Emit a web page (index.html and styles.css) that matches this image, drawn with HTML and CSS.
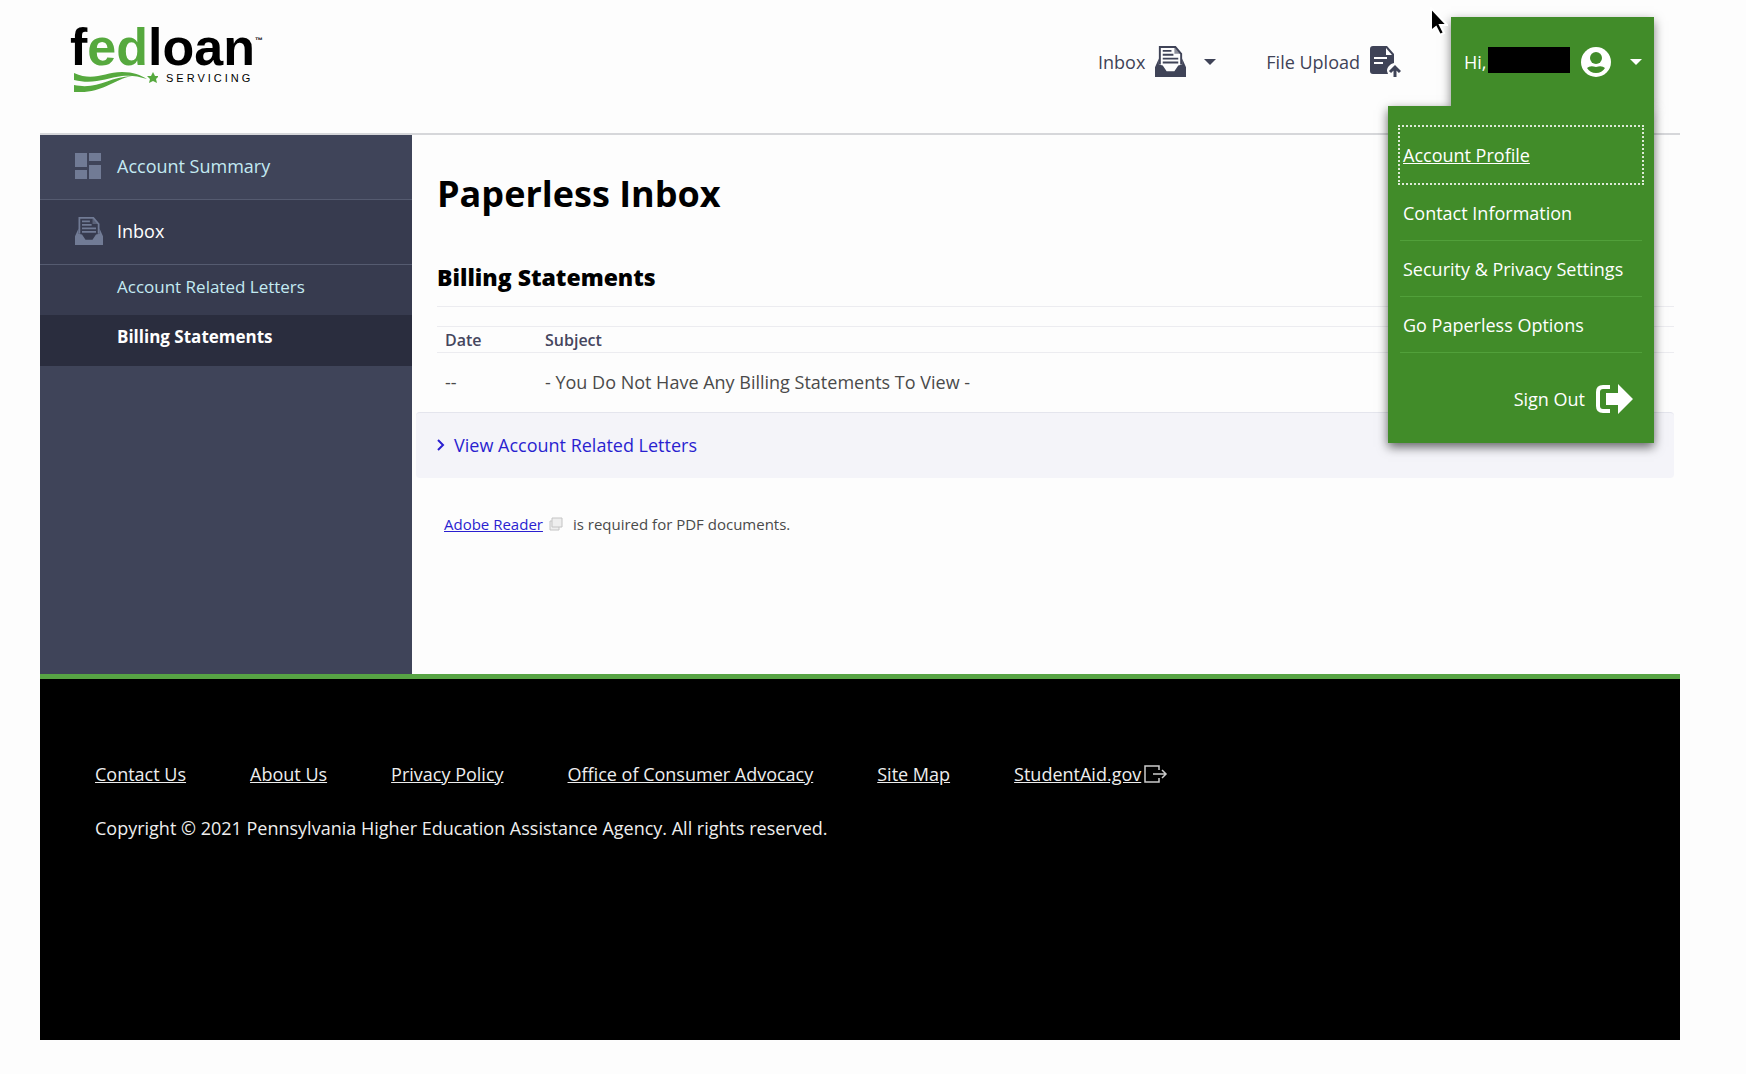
FILE: index.html
```html
<!DOCTYPE html>
<html lang="en">
<head>
<meta charset="utf-8">
<meta name="viewport" content="width=device-width, initial-scale=1">
<title>Paperless Inbox - FedLoan Servicing</title>
<link rel="stylesheet" href="styles.css">
</head>
<body>
<svg class="defs" width="0" height="0" aria-hidden="true">
  <symbol id="icon-inbox" viewBox="0 0 32 32">
    <path d="M5 19V1h16l6 7v11" fill="none" stroke="currentColor" stroke-width="2"/>
    <path d="M20 1v7h7z" fill="currentColor" opacity=".6"/>
    <path d="M8 5h9M8 9h11M8 13h16M8 17h16" fill="none" stroke="currentColor" stroke-width="2"/>
    <path d="M4 13L0 22v10h32V22l-4-9v6l-4 1-4 6h-8l-4-6-4-1z" fill="currentColor"/>
  </symbol>
</svg>
<div class="page">
  <header class="header">
    <a class="logo" href="#" aria-label="FedLoan Servicing">
      <span class="logo-name">f<span class="logo-green">ed</span>loan<span class="logo-tm">™</span></span>
      <span class="logo-sub">
        <svg width="84" height="20" viewBox="0 0 84 20" aria-hidden="true">
          <path d="M0 1C20 10 30 0 48 0C60 0 66 3 73 7C64 4 56 3 48 4C32 6 20 13 0 8Z" fill="#56a93e"/>
          <path d="M0 13C24 18 34 5 58 4C38 8 28 22 0 20Z" fill="#56a93e"/>
          <path d="M79 0l2 4 4 0-3 3 1 4-4-2-4 2 1-4-3-3 4 0z" fill="#56a93e"/>
        </svg>
        <span class="logo-servicing">SERVICING</span>
      </span>
    </a>
    <nav class="tools" aria-label="Tools">
      <button class="tool" type="button">Inbox
        <svg width="31" height="31"><use href="#icon-inbox"/></svg>
        <span class="caret"></span>
      </button>
      <a class="tool" href="#">File Upload
        <svg width="31" height="31" viewBox="0 0 31 31" aria-hidden="true">
          <path d="M3 0h14l7 8v9c-4 1-7 4-7 8l1 3H3q-3 0-3-3V3q0-3 3-3z" fill="currentColor"/>
          <path d="M16 2v7h6z" fill="#fff"/>
          <path d="M4 12h13M4 17h9" stroke="#fff" stroke-width="2"/>
          <path d="M25 31V21M20 26l5-5 5 5" fill="none" stroke="currentColor" stroke-width="3"/>
        </svg>
      </a>
      <div class="user">
        <button class="user-toggle" type="button" aria-expanded="true" aria-label="Account menu">
          <span>Hi,</span><span class="redacted"></span>
          <svg width="32" height="32" viewBox="0 0 32 32" aria-hidden="true">
            <circle cx="16" cy="16" r="15" fill="#fff"/>
            <circle cx="16" cy="12" r="6" fill="#418c29"/>
            <path d="M7 22q3-3 9-1 6-2 9 1-3 5-9 5t-9-5z" fill="#418c29"/>
          </svg>
          <span class="caret"></span>
        </button>
        <div class="menu">
          <a class="menu-item menu-focus" href="#">Account Profile</a>
          <a class="menu-item" href="#">Contact Information</a>
          <a class="menu-item" href="#">Security &amp; Privacy Settings</a>
          <a class="menu-item" href="#">Go Paperless Options</a>
          <a class="sign-out" href="#">Sign Out
            <svg width="38" height="30" viewBox="0 0 38 30" aria-hidden="true">
              <path d="M15 3H8Q3 3 3 8v14q0 5 5 5h7" fill="none" stroke="#fff" stroke-width="4"/>
              <path d="M11 9h12V0l15 15-15 15v-9H11z" fill="#fff"/>
            </svg>
          </a>
        </div>
      </div>
    </nav>
  </header>
  <div class="body">
    <nav class="sidebar" aria-label="Account">
      <a class="side-item" href="#">
        <svg width="26" height="26" viewBox="0 0 26 26" aria-hidden="true"><path d="M0 0h12v14H0zM14 0h12v8H14zM0 17h12v9H0zM14 12h12v14H14z" fill="currentColor"/></svg>
        Account Summary</a>
      <a class="side-item side-open" href="#">
        <svg width="28" height="28" viewBox="0 0 32 32" aria-hidden="true"><use href="#icon-inbox"/></svg>
        Inbox</a>
      <a class="side-sub" href="#">Account Related Letters</a>
      <a class="side-sub side-current" href="#">Billing Statements</a>
    </nav>
    <main class="main">
      <h1>Paperless Inbox</h1>
      <h2>Billing Statements</h2>
      <table class="statements">
        <thead><tr><th scope="col" class="col-date">Date</th><th scope="col">Subject</th></tr></thead>
        <tbody><tr><td>--</td><td>- You Do Not Have Any Billing Statements To View -</td></tr></tbody>
      </table>
      <a class="related" href="#">
        <svg width="8" height="14" viewBox="0 0 8 14" aria-hidden="true"><path d="M1 2l5 5-5 5" fill="none" stroke="currentColor" stroke-width="2"/></svg>
        View Account Related Letters</a>
      <p class="note"><a href="#">Adobe Reader</a>
        <svg width="14" height="14" viewBox="0 0 14 14" aria-hidden="true"><path d="M3 1h10v9h-3v3H1V4h2z" fill="#eee" stroke="#c4c4c4"/><path d="M3 4v6h7" fill="none" stroke="#c4c4c4"/></svg>
        <span>is required for PDF documents.</span></p>
    </main>
  </div>
  <footer class="footer">
    <nav class="footer-links" aria-label="Footer">
      <a href="#">Contact Us</a>
      <a href="#">About Us</a>
      <a href="#">Privacy Policy</a>
      <a href="#">Office of Consumer Advocacy</a>
      <a href="#">Site Map</a>
      <span class="external"><a href="#">StudentAid.gov</a>
        <svg width="24" height="18" viewBox="0 0 24 18" aria-hidden="true"><path d="M15 5V1H1v16h14v-4M9 9h13M18 5l4 4-4 4" fill="none" stroke="#ccc" stroke-width="1.5"/></svg></span>
    </nav>
    <p class="copyright">Copyright © 2021 Pennsylvania Higher Education Assistance Agency. All rights reserved.</p>
  </footer>
</div>
<svg class="pointer" width="18" height="30" viewBox="0 0 18 30" aria-hidden="true"><path d="M1 1v23l5-4 4 8 4-2-4-8h7z" fill="#000" stroke="#fff" stroke-width="2"/></svg>
</body>
</html>
```
FILE: styles.css
```css
* { box-sizing: border-box; }
body { margin: 0; background: #fdfdfd; color: #4a4a4a; font: 18px/24px "Open Sans", sans-serif; }
a { color: inherit; text-decoration: none; }
button { padding: 0; border: 0; background: none; color: inherit; font: inherit; }
svg { display: block; flex: none; }
h1, h2, p { margin: 0; }
.defs { position: absolute; }
.page { margin: 0 66px 34px 40px; }

.header { display: flex; justify-content: space-between; height: 135px; border-bottom: 2px solid #d6d7da; }
.logo { padding: 23px 0 0 30px; color: #000; }
.logo-name { display: flex; font: bold 52px/49px "Liberation Sans", sans-serif; }
.logo-green { color: #56a93e; }
.logo-tm { font-size: 8px; line-height: 36px; }
.logo-sub { display: flex; gap: 8px; padding-left: 4px; }
.logo-servicing { font: 11px/12px "Liberation Sans", sans-serif; letter-spacing: 3px; }

.tools { display: flex; padding-top: 17px; }
.tool { display: flex; align-items: center; gap: 10px; height: 89px; margin-right: 50px; color: #3f4357; }
.caret { border: 6px solid transparent; border-top-color: currentColor; border-bottom: 0; }
.tool .caret { margin-left: 8px; }
.user { position: relative; width: 203px; height: 89px; margin-right: 26px; background: #418c29; color: #fff; box-shadow: 0 4px 10px rgba(0, 0, 0, .5); }
.user-toggle { display: flex; align-items: center; width: 100%; height: 90px; padding: 0 12px 0 13px; background: #418c29; position: relative; z-index: 2; }
.redacted { width: 82px; height: 26px; margin: 0 10px 4px 2px; background: #000; }
.user-toggle .caret { margin-left: auto; }
.menu { position: absolute; z-index: 1; top: 89px; right: 0; width: 266px; height: 337px; padding: 19px 10px; background: #418c29; box-shadow: 0 4px 10px rgba(0, 0, 0, .6); }
.menu-item { display: flex; align-items: center; height: 56px; margin: 0 2px; padding: 0 3px; border-bottom: 1px solid #51a03a; }
.menu-focus { height: 60px; margin: 0; padding: 0 3px; border: 2px dotted #dcebd6; text-decoration: underline; }
.sign-out { display: flex; align-items: center; justify-content: flex-end; gap: 10px; padding: 31px 11px 0 0; }

.body { display: flex; min-height: 539px; }
.sidebar { flex: 0 0 372px; background: #3f4459; color: #c3eaf2; }
.side-item { display: flex; align-items: center; gap: 16px; height: 65px; padding: 0 35px 2px; border-bottom: 1px solid #555b70; }
.side-item svg { color: #717b95; }
.side-open { gap: 14px; color: #fff; }
.side-open, .side-sub { background: #373b4f; }
.side-sub { display: flex; align-items: center; height: 50px; padding: 0 77px 6px; font-size: 17px; }
.side-current { height: 51px; padding-bottom: 8px; background: #2a2d3e; color: #fff; font-weight: bold; }

.main { flex: 1; padding: 32px 6px 0 4px; }
h1 { padding-left: 21px; color: #000; font-size: 36px; line-height: 54px; }
h2 { margin: 38px 0 19px 21px; padding-bottom: 11px; border-bottom: 1px solid #ececf0; color: #000; font-size: 23px; line-height: 36px; font-weight: 800; }
.statements { width: calc(100% - 21px); margin-left: 21px; border-collapse: collapse; }
th { height: 26px; padding: 0 8px; border: solid #ececf0; border-width: 1px 0; color: #45465e; font-size: 16px; font-weight: 600; text-align: left; }
.col-date { width: 100px; }
td { height: 59px; padding: 0 8px; }
.related { display: flex; align-items: center; gap: 9px; height: 66px; padding-left: 21px; border-top: 1px solid #e4e5ed; border-radius: 4px; background: #f4f4f9; color: #2a1fd0; }
.note { display: flex; align-items: center; gap: 6px; padding: 34px 0 0 28px; font-size: 15px; }
.note a { color: #2a1fd0; text-decoration: underline; }
.note span { margin-left: 4px; }

.footer { min-height: 366px; padding: 83px 55px; border-top: 5px solid #57a444; background: #000; color: #eee; }
.footer-links { display: flex; flex-wrap: wrap; gap: 16px 64px; }
.footer-links a { text-decoration: underline; }
.external { display: flex; align-items: center; gap: 3px; }
.copyright { margin-top: 30px; }
.pointer { position: absolute; z-index: 3; top: 7px; left: 1430px; }
```
